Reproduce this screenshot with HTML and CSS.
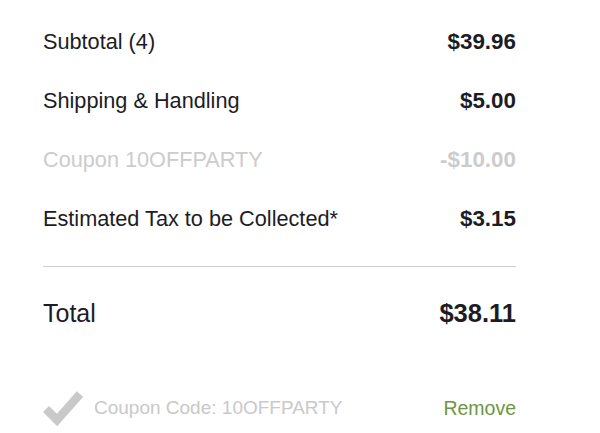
FILE: index.html
```html
<!DOCTYPE html>
<html>
<head>
<meta charset="utf-8">
<link rel="stylesheet" href="styles.css">
</head>
<body>
<div class="summary">
  <div class="row"><span>Subtotal (4)</span><span class="amt">$39.96</span></div>
  <div class="row"><span>Shipping &amp; Handling</span><span class="amt">$5.00</span></div>
  <div class="row muted"><span>Coupon 10OFFPARTY</span><span class="amt">-$10.00</span></div>
  <div class="row"><span>Estimated Tax to be Collected*</span><span class="amt">$3.15</span></div>
  <div class="divider"></div>
  <div class="row total"><span>Total</span><span class="amt">$38.11</span></div>
  <div class="coupon">
    <div class="coupon-left">
      <svg class="check" width="40" height="36" viewBox="0 0 40 36"><path d="M3 19 L14 30 L37 4" fill="none" stroke="#c9c9c9" stroke-width="8.5" stroke-linejoin="miter"/></svg>
      <span class="code">Coupon Code: 10OFFPARTY</span>
    </div>
    <span class="remove">Remove</span>
  </div>
</div>
</body>
</html>
```
FILE: styles.css
```css
html, body { margin: 0; padding: 0; background: #fff; }
body { font-family: "Liberation Sans", Arial, sans-serif; color: #1c1c24; }
.summary { width: 473px; margin-left: 43px; padding-top: 12px; }
.row { display: flex; justify-content: space-between; align-items: center; height: 59px; font-size: 21.7px; }
.amt { font-weight: bold; font-size: 22.4px; }
.muted { color: #cccccc; }
.divider { height: 1px; background: #cfcfcf; margin-top: 18px; }
.total { font-size: 25px; height: 92px; }
.total .amt { font-size: 25.5px; }
.coupon { display: flex; justify-content: space-between; align-items: center; height: 44px; margin-top: 27px; font-size: 19px; }
.coupon-left { display: flex; align-items: center; gap: 11px; }
.check { display: block; }
.code { color: #c9c9c9; }
.remove { color: #6b9740; font-size: 19.5px; }
```
